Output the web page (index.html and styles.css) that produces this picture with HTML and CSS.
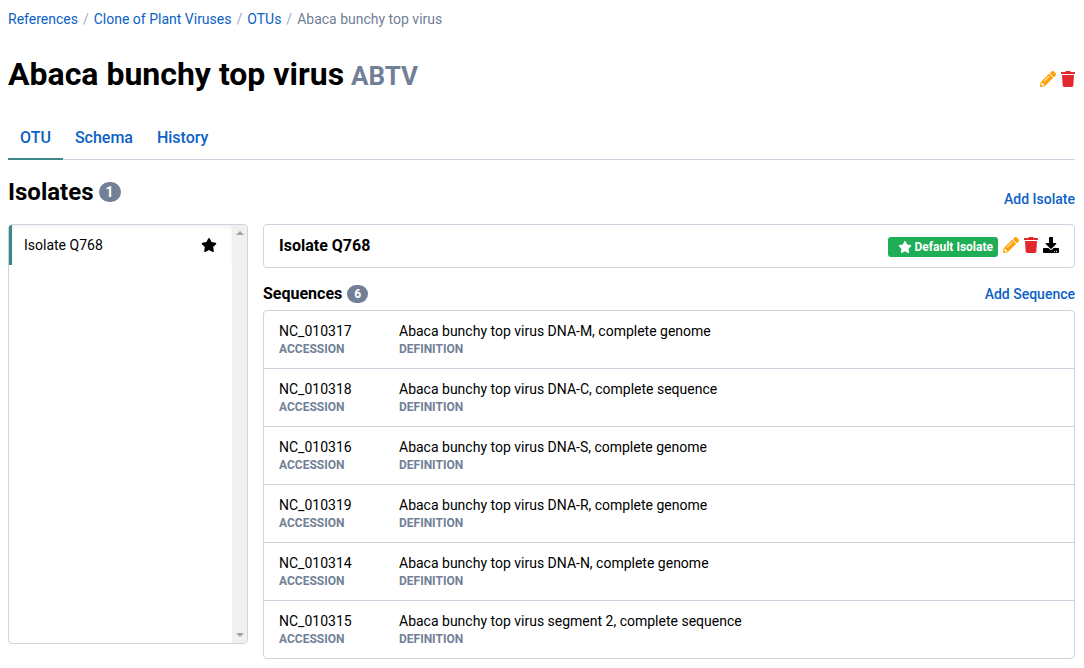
FILE: index.html
```html
<!DOCTYPE html>
<html lang="en">
<head>
<meta charset="utf-8">
<meta name="viewport" content="width=device-width, initial-scale=1">
<title>Abaca bunchy top virus</title>
<link rel="stylesheet" href="styles.css">
</head>
<body>
<svg class="sprite" aria-hidden="true">
  <symbol id="pencil" viewBox="0 0 512 512"><path d="M497.9 142.1l-46.1 46.1c-4.7 4.7-12.3 4.7-17 0l-111-111c-4.7-4.7-4.7-12.3 0-17l46.1-46.1c18.7-18.7 49.1-18.7 67.9 0l60.1 60.1c18.8 18.7 18.8 49.1 0 67.9zM284.2 99.8L21.6 362.4.4 483.9c-2.9 16.4 11.4 30.6 27.8 27.8l121.5-21.3 262.6-262.6c4.7-4.7 4.7-12.3 0-17l-111-111c-4.8-4.7-12.4-4.7-17.1 0zM124.1 339.9c-5.5-5.5-5.5-14.3 0-19.8l154-154c5.5-5.5 14.3-5.5 19.8 0s5.5 14.3 0 19.8l-154 154c-5.5 5.5-14.3 5.5-19.8 0zM88 424h48v36.3l-64.5 11.3-31.1-31.1L51.7 376H88v48z"/></symbol>
  <symbol id="trash" viewBox="0 0 448 512"><path d="M432 32H312l-9.4-18.7A24 24 0 0 0 281.1 0H166.8a23.72 23.72 0 0 0-21.4 13.3L136 32H16A16 16 0 0 0 0 48v32a16 16 0 0 0 16 16h416a16 16 0 0 0 16-16V48a16 16 0 0 0-16-16zM53.2 467a48 48 0 0 0 47.9 45h245.8a48 48 0 0 0 47.9-45L416 128H32z"/></symbol>
  <symbol id="star" viewBox="0 0 576 512"><path d="M259.3 17.8L194 150.2 47.9 171.5c-26.2 3.8-36.7 36.1-17.7 54.6l105.7 103-25 145.5c-4.5 26.3 23.2 46 46.4 33.7L288 439.6l130.7 68.7c23.2 12.2 50.9-7.4 46.4-33.7l-25-145.5 105.7-103c19-18.5 8.5-50.8-17.7-54.6L382 150.2 316.7 17.8c-11.7-23.6-45.6-23.9-57.4 0z"/></symbol>
  <symbol id="download" viewBox="0 0 512 512"><path d="M216 0h80c13.3 0 24 10.7 24 24v168h87.7c17.8 0 26.7 21.5 14.1 34.1L269.7 378.3c-7.5 7.5-19.8 7.5-27.3 0L90.1 226.1c-12.6-12.6-3.7-34.1 14.1-34.1H192V24c0-13.3 10.7-24 24-24zm296 376v112c0 13.3-10.7 24-24 24H24c-13.3 0-24-10.7-24-24V376c0-13.3 10.7-24 24-24h146.7l49 49c20.1 20.1 52.5 20.1 72.6 0l49-49H488c13.3 0 24 10.7 24 24zm-124 88c0-11-9-20-20-20s-20 9-20 20 9 20 20 20 20-9 20-20zm64 0c0-11-9-20-20-20s-20 9-20 20 9 20 20 20 20-9 20-20z"/></symbol>
</svg>
<main class="page">
  <nav class="breadcrumb" aria-label="Breadcrumb">
    <a href="#">References</a><span class="slash">/</span><a href="#">Clone of Plant Viruses</a><span class="slash">/</span><a href="#">OTUs</a><span class="slash">/</span><span class="current">Abaca bunchy top virus</span>
  </nav>

  <header class="title-bar">
    <h1 class="title">Abaca bunchy top virus <small class="abbreviation">ABTV</small></h1>
    <div class="actions">
      <button class="icon-button edit" aria-label="Edit OTU"><svg class="icon"><use href="#pencil"/></svg></button>
      <button class="icon-button remove" aria-label="Remove OTU"><svg class="icon narrow"><use href="#trash"/></svg></button>
    </div>
  </header>

  <nav class="tabs">
    <a class="tab active" href="#">OTU</a>
    <a class="tab" href="#">Schema</a>
    <a class="tab" href="#">History</a>
  </nav>

  <div class="section-bar">
    <h2 class="section-title">Isolates <span class="badge">1</span></h2>
    <a class="add-link" href="#">Add Isolate</a>
  </div>

  <div class="editor">
    <div class="isolate-list">
      <div class="isolate-items">
        <button class="isolate-item">Isolate Q768<svg class="item-star"><use href="#star"/></svg></button>
      </div>
      <div class="scroll-track" aria-hidden="true"><span class="arrow up"></span><span class="arrow down"></span></div>
    </div>

    <section class="detail">
      <div class="isolate-header">
        <h3 class="isolate-name">Isolate Q768</h3>
        <div class="actions">
          <span class="default-label"><svg class="label-star"><use href="#star"/></svg>Default Isolate</span>
          <button class="icon-button edit" aria-label="Edit isolate"><svg class="icon"><use href="#pencil"/></svg></button>
          <button class="icon-button remove" aria-label="Remove isolate"><svg class="icon narrow"><use href="#trash"/></svg></button>
          <button class="icon-button" aria-label="Download isolate"><svg class="icon"><use href="#download"/></svg></button>
        </div>
      </div>

      <div class="sequence-bar">
        <h3 class="sequence-title">Sequences <span class="badge small">6</span></h3>
        <a class="add-link" href="#">Add Sequence</a>
      </div>

      <ul class="sequences">
        <li class="sequence"><div class="field">NC_010317<small class="caption">Accession</small></div><div class="field">Abaca bunchy top virus DNA-M, complete genome<small class="caption">Definition</small></div></li>
        <li class="sequence"><div class="field">NC_010318<small class="caption">Accession</small></div><div class="field">Abaca bunchy top virus DNA-C, complete sequence<small class="caption">Definition</small></div></li>
        <li class="sequence"><div class="field">NC_010316<small class="caption">Accession</small></div><div class="field">Abaca bunchy top virus DNA-S, complete genome<small class="caption">Definition</small></div></li>
        <li class="sequence"><div class="field">NC_010319<small class="caption">Accession</small></div><div class="field">Abaca bunchy top virus DNA-R, complete genome<small class="caption">Definition</small></div></li>
        <li class="sequence"><div class="field">NC_010314<small class="caption">Accession</small></div><div class="field">Abaca bunchy top virus DNA-N, complete genome<small class="caption">Definition</small></div></li>
        <li class="sequence"><div class="field">NC_010315<small class="caption">Accession</small></div><div class="field">Abaca bunchy top virus segment 2, complete sequence<small class="caption">Definition</small></div></li>
      </ul>
    </section>
  </div>
</main>
</body>
</html>
```

FILE: styles.css
```css
* { box-sizing: border-box; }

body {
  margin: 0;
  background: #fff;
  color: #000;
  font: 14px/20px Roboto, sans-serif;
}

h1, h2, h3, ul { margin: 0; padding: 0; }
a { color: #0b62c4; text-decoration: none; }
button {
  border: 0;
  padding: 0;
  background: none;
  color: inherit;
  font: inherit;
  cursor: pointer;
}

.sprite { display: none; }
.page { padding: 9px 9px 9px 8px; }

.breadcrumb { display: flex; }
.slash { padding: 0 5px; color: #a0aec0; }
.current { color: #718096; }

.title-bar {
  display: flex;
  align-items: center;
  justify-content: space-between;
  margin-top: 24px;
}
.title {
  display: flex;
  align-items: baseline;
  gap: 7px;
  font-size: 32px;
  line-height: 42px;
  font-weight: 700;
}
.abbreviation { font-size: 26px; color: #718096; }
.title-bar .actions { padding-top: 8px; }

.actions { display: flex; align-items: flex-start; gap: 5px; }
.icon-button { display: flex; }
.icon { width: 16px; height: 16px; fill: currentColor; }
.icon.narrow { width: 14px; }
.edit { color: #ffa000; }
.remove { color: #e0282e; }

.tabs {
  display: flex;
  margin-top: 19px;
  border-bottom: 1px solid #cbd5e0;
}
.tab {
  margin-bottom: -1px;
  padding: 12px 12px 10px;
  border-bottom: 2px solid transparent;
  font-size: 16px;
  font-weight: 500;
}
.tab.active { border-color: #3c8786; }

.section-bar {
  display: flex;
  justify-content: space-between;
  align-items: center;
  margin-top: 15px;
}
.section-title {
  display: flex;
  align-items: center;
  gap: 5px;
  font-size: 24px;
  line-height: 34px;
}
.section-bar .add-link { padding-top: 14px; }
.badge {
  padding: 0 7px;
  border-radius: 10px;
  background: #718096;
  color: #fff;
  font-size: 14px;
  line-height: 20px;
  font-weight: 700;
}
.badge.small { font-size: 12px; line-height: 18px; }
.add-link { font-weight: 500; }

.editor {
  display: grid;
  grid-template-columns: 240px 1fr;
  gap: 15px;
  align-items: start;
  margin-top: 15px;
}

.isolate-list {
  display: flex;
  height: 420px;
  overflow: hidden;
  border: 1px solid #cbd5e0;
  border-radius: 4px;
}
.isolate-items { flex: 1; }
.isolate-item {
  display: flex;
  align-items: center;
  justify-content: space-between;
  width: 100%;
  height: 40px;
  padding: 0 15px 0 12px;
  border-left: 3px solid #3c8786;
  box-shadow: inset 0 2px 4px #0000000f;
}
.item-star { width: 16px; height: 14px; fill: currentColor; }
.scroll-track {
  display: flex;
  flex-direction: column;
  justify-content: space-between;
  align-items: center;
  width: 15px;
  padding: 6px 0;
  background: #f0f0f0;
}
.arrow { border: 4px solid transparent; }
.arrow.up { border-top: 0; border-bottom-color: #a3a3a3; }
.arrow.down { border-bottom: 0; border-top-color: #a3a3a3; }

.isolate-header {
  display: flex;
  align-items: center;
  justify-content: space-between;
  height: 44px;
  padding: 0 15px;
  border: 1px solid #cbd5e0;
  border-radius: 4px;
}
.isolate-header .actions { padding-top: 2px; }
.isolate-name, .sequence-title { font-size: 16px; font-weight: 700; }
.default-label {
  display: flex;
  align-items: center;
  gap: 2px;
  padding: 0 5px 0 10px;
  border-radius: 3px;
  background: #1fad55;
  color: #fff;
  font-size: 12px;
  font-weight: 700;
}
.label-star { width: 14px; height: 12px; fill: currentColor; }

.sequence-bar {
  display: flex;
  align-items: center;
  justify-content: space-between;
  margin: 16px 0 6px;
}
.sequence-title { display: flex; align-items: center; gap: 5px; }

.sequences {
  list-style: none;
  border: 1px solid #cbd5e0;
  border-radius: 4px;
}
.sequence {
  display: grid;
  grid-template-columns: 120px 1fr;
  padding: 10px 15px;
}
.sequence + .sequence { border-top: 1px solid #cbd5e0; }
.field { line-height: 20px; }
.caption {
  display: block;
  color: #718096;
  font-size: 12px;
  line-height: 17px;
  font-weight: 700;
  text-transform: uppercase;
}
```
